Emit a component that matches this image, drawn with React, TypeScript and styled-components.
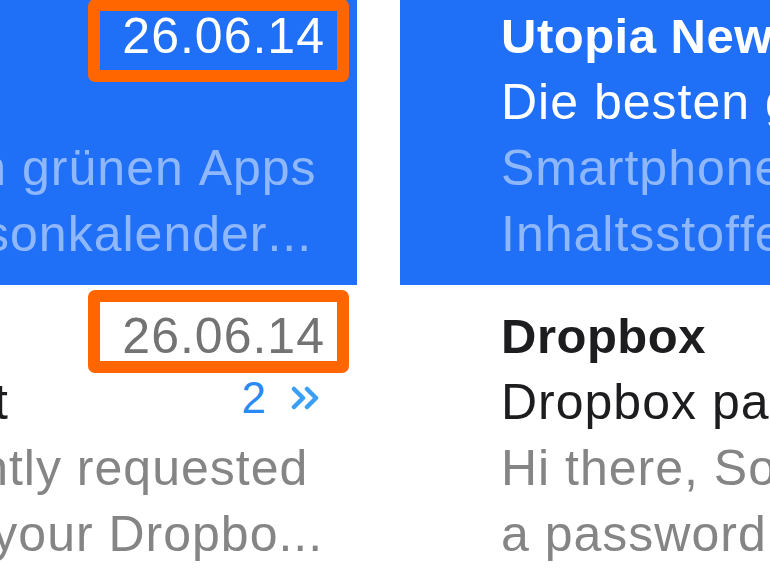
import React from 'react';
import styled, { createGlobalStyle, css } from 'styled-components';

type Mail = {
  sender: string;
  subject: string;
  date: string;
  preview: string[];
  selected?: boolean;
  thread?: number;
  mark?: number;
};

// two mail lists, cropped: the left one shows only its right end
const leftMails: Mail[] = [
  {
    sender: 'Utopia Newsletter',
    subject: 'Grüne Apps im Test',
    date: '26.06.14',
    preview: ['Neu im Blog: Die besten grünen Apps', 'Kleidung und unser Saisonkalender...'],
    selected: true,
    mark: 4.5,
  },
  {
    sender: 'Dropbox',
    subject: 'Dropbox password reset',
    date: '26.06.14',
    thread: 2,
    preview: ['Hi Jana, someone recently requested', 'a password change via your Dropbo...'],
    mark: -4.5,
  },
];

const rightMails: Mail[] = [
  {
    sender: 'Utopia Newsletter',
    subject: 'Die besten grünen Apps fürs Smartphone',
    date: '26.06.14',
    preview: ['Smartphone-Apps für Einkauf und Kosmetik-', 'Inhaltsstoffe und ein Saisonkalender...'],
    selected: true,
  },
  {
    sender: 'Dropbox',
    subject: 'Dropbox password reset',
    date: '26.06.14',
    thread: 2,
    preview: ['Hi there, Someone recently requested', 'a password change for your Dropbox...'],
  },
];

function Chevrons() {
  return (
    <svg width="30" height="24" viewBox="0 0 30 24" fill="none">
      <path
        d="M4 3l9 9-9 9M17 3l9 9-9 9"
        stroke="currentColor"
        strokeWidth="4.5"
        strokeLinecap="round"
        strokeLinejoin="round"
      />
    </svg>
  );
}

function MessageItem({ mail }: { mail: Mail }) {
  return (
    <Item $selected={!!mail.selected}>
      <Row>
        <Sender>{mail.sender}</Sender>
        <DateLabel $mark={mail.mark}>{mail.date}</DateLabel>
      </Row>
      <Row>
        <Subject>{mail.subject}</Subject>
        {mail.thread ? (
          <ThreadCount>
            {mail.thread}
            <ThreadArrow>
              <Chevrons />
            </ThreadArrow>
          </ThreadCount>
        ) : null}
      </Row>
      {mail.preview.map((line) => (
        <PreviewLine key={line}>{line}</PreviewLine>
      ))}
    </Item>
  );
}

function App() {
  return (
    <>
      <GlobalStyle />
      <Viewport>
        <Pane $anchor="end">
          <MailList>
            {leftMails.map((mail) => (
              <MessageItem key={mail.sender} mail={mail} />
            ))}
          </MailList>
        </Pane>
        <Pane $anchor="start">
          <MailList>
            {rightMails.map((mail) => (
              <MessageItem key={mail.sender} mail={mail} />
            ))}
          </MailList>
        </Pane>
      </Viewport>
    </>
  );
}

export default App;

const GlobalStyle = createGlobalStyle`
  html, body {
    margin: 0;
    padding: 0;
    background: #ffffff;
  }
  body {
    font-family: 'Liberation Sans', Arial, 'Helvetica Neue', sans-serif;
    font-kerning: none;
  }
`;

const Viewport = styled.div`
  display: flex;
  gap: 43px;
  width: 770px;
  height: 578px;
  overflow: hidden;
  background: #ffffff;
`;

const Pane = styled.div<{ $anchor: 'start' | 'end' }>`
  display: flex;
  justify-content: ${({ $anchor }) => ($anchor === 'end' ? 'flex-end' : 'flex-start')};
  align-items: flex-start;
  overflow: hidden;
  ${({ $anchor }) => ($anchor === 'end' ? 'flex: 0 0 357px;' : 'flex: 1 1 auto;')}
`;

const MailList = styled.div`
  flex: none;
  display: flex;
  flex-direction: column;
  width: 1013px;
  margin-top: -15px;
`;

const Item = styled.div<{ $selected: boolean }>`
  display: flex;
  flex-direction: column;
  padding: 18px 32px 18px 101px;
  background: ${({ $selected }) => ($selected ? '#1f6ff7' : '#ffffff')};
  --text: ${({ $selected }) => ($selected ? '#ffffff' : '#1d1d1f')};
  --muted: ${({ $selected }) => ($selected ? 'rgba(255, 255, 255, 0.5)' : '#858585')};
  --date: ${({ $selected }) => ($selected ? '#ffffff' : '#737373')};
`;

const Row = styled.div`
  display: flex;
  align-items: center;
  gap: 16px;
  height: 66px;
  line-height: 66px;
`;

const Sender = styled.span`
  flex: 1;
  min-width: 0;
  font-size: 49px;
  font-weight: 700;
  letter-spacing: 0.5px;
  color: var(--text);
  white-space: nowrap;
  overflow: hidden;
`;

const DateLabel = styled.span<{ $mark?: number }>`
  position: relative;
  flex: none;
  font-size: 50px;
  letter-spacing: 1px;
  color: var(--date);
  white-space: nowrap;
  ${({ $mark }) =>
    $mark !== undefined &&
    css`
      &::after {
        content: '';
        position: absolute;
        left: -34px;
        right: -24px;
        top: ${-8.5 + $mark}px;
        bottom: ${-8.5 - $mark}px;
        border: 12px solid #ff6600;
        border-radius: 7px;
      }
    `}
`;

const Subject = styled.span`
  flex: 1;
  min-width: 0;
  font-size: 50px;
  letter-spacing: 1px;
  color: var(--text);
  white-space: nowrap;
  overflow: hidden;
`;

const ThreadCount = styled.span`
  flex: none;
  display: flex;
  align-items: center;
  gap: 24px;
  margin-bottom: 8px;
  padding-right: 5px;
  font-size: 44px;
  line-height: 1;
  color: #2a8af3;
`;

const ThreadArrow = styled.span`
  display: flex;
  color: #3a9ff6;
`;

const PreviewLine = styled.div`
  height: 66px;
  line-height: 66px;
  font-size: 50px;
  letter-spacing: 1px;
  color: var(--muted);
  white-space: nowrap;
`;
